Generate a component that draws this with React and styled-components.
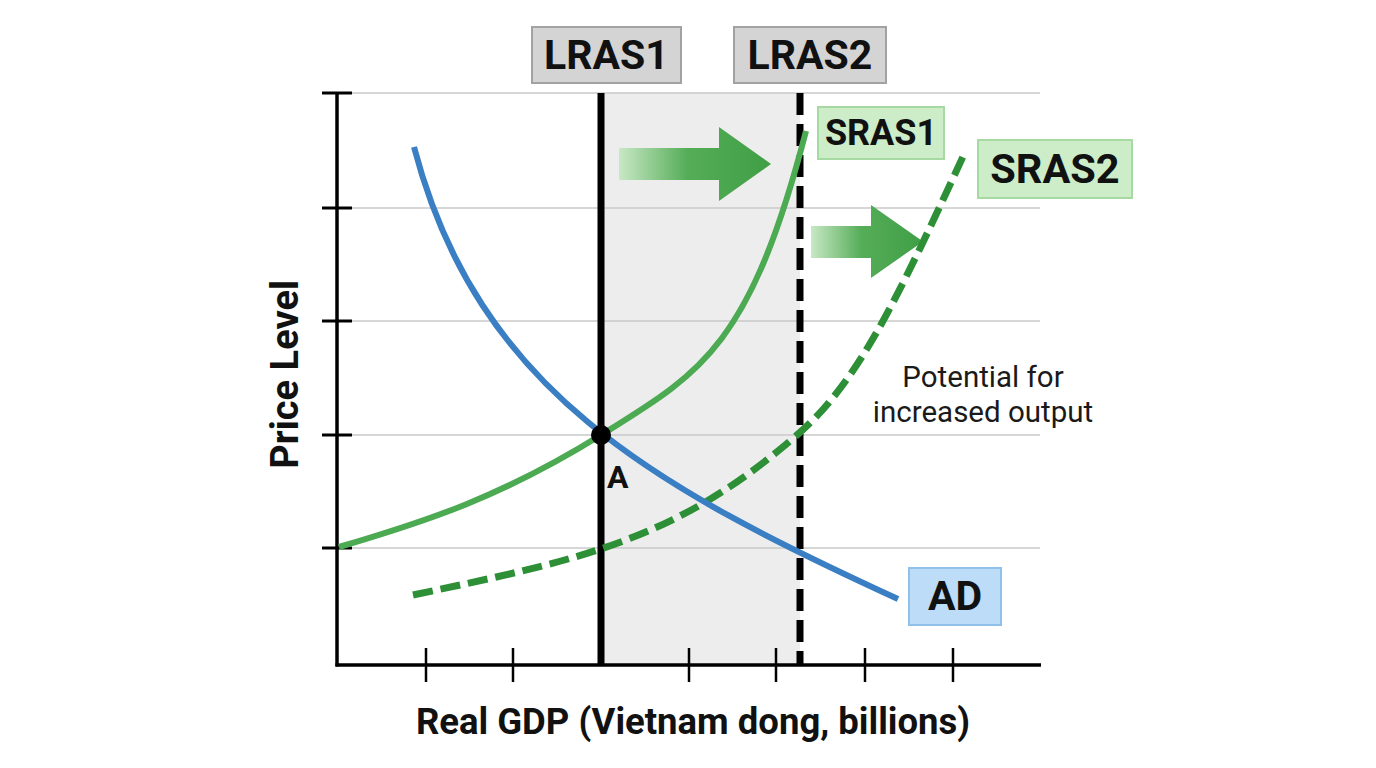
import React from "react";
import styled, { createGlobalStyle } from "styled-components";

const Global = createGlobalStyle`
  html, body { margin: 0; padding: 0; background: #ffffff; }
  body { font-family: Roboto, "Liberation Sans", Arial, sans-serif; color: #111111; }
`;

const PLOT_X = 310;
const PLOT_W = 850;
const PLOT_H = 695;

const Page = styled.div`
  width: 1376px;
  height: 768px;
  display: flex;
  flex-direction: column;
  background: #ffffff;
  overflow: hidden;
`;

const ChartRow = styled.div`
  display: flex;
  height: ${PLOT_H}px;
`;

const YAxisCell = styled.div`
  width: ${PLOT_X}px;
  flex: none;
  display: flex;
  justify-content: flex-end;
  align-items: center;
  box-sizing: border-box;
  padding-right: 6px;
  padding-top: 53px;
`;

const YTitle = styled.div`
  writing-mode: vertical-rl;
  transform: rotate(180deg);
  font-family: Roboto, "Liberation Sans", Arial, sans-serif;
  font-weight: 700;
  font-size: 38px;
  line-height: 1;
  white-space: nowrap;
`;

const Plot = styled.div`
  position: relative;
  width: ${PLOT_W}px;
  height: ${PLOT_H}px;
  flex: none;
`;

const ChartSvg = styled.svg`
  display: block;
  width: ${PLOT_W}px;
  height: ${PLOT_H}px;
  overflow: visible;
`;

const Tag = styled.div`
  position: absolute;
  left: ${(p) => p.$x - PLOT_X}px;
  top: ${(p) => p.$y}px;
  width: ${(p) => p.$w}px;
  height: ${(p) => p.$h}px;
  box-sizing: border-box;
  display: flex;
  align-items: center;
  justify-content: center;
  background: ${(p) => p.$bg};
  border: 2px solid ${(p) => p.$border};
  font-family: Roboto, "Liberation Sans", Arial, sans-serif;
  font-weight: 700;
  font-size: ${(p) => p.$size}px;
  line-height: 1;
  color: #111111;
`;

const PointLabel = styled.div`
  position: absolute;
  left: ${(p) => p.$x - PLOT_X}px;
  top: ${(p) => p.$y}px;
  font-family: Roboto, "Liberation Sans", Arial, sans-serif;
  font-weight: 700;
  font-size: 32px;
  line-height: 1;
  color: #111111;
`;

const Note = styled.div`
  position: absolute;
  left: ${853 - PLOT_X}px;
  top: 360px;
  width: 260px;
  text-align: center;
  font-family: Roboto, "Liberation Sans", Arial, sans-serif;
  font-weight: 400;
  font-size: 29.5px;
  line-height: 35px;
  color: #1a1a1a;
`;

const XAxisRow = styled.div`
  flex: 1;
  box-sizing: border-box;
  padding: 9px 0 0 10px;
  text-align: center;
`;

const XTitle = styled.div`
  font-family: Roboto, "Liberation Sans", Arial, sans-serif;
  font-weight: 700;
  font-size: 36.5px;
  line-height: 1;
  white-space: nowrap;
`;

const AD_PATH = "M414,147 C478,391 653,486.5 898,599";
const SRAS1_PATH = "M339,547 C426,521.5 501,497 601,435 C701,373 750,346.6 806,131";
const SRAS2_PATH = "M413,595 C584,559 677,539.4 797,435 C857,382.8 893.5,307.5 966,150";

const gridYs = [93, 208, 321, 435, 548];
const xTicks = [426, 513, 689, 776, 865, 953];

function arrow(x0, yTop, yBot, xHead, hTop, hBot, xTip) {
  const yMid = (hTop + hBot) / 2;
  return `${x0},${yTop} ${xHead},${yTop} ${xHead},${hTop} ${xTip},${yMid} ${xHead},${hBot} ${xHead},${yBot} ${x0},${yBot}`;
}

function Chart() {
  return (
    <ChartSvg viewBox={`${PLOT_X} 0 ${PLOT_W} ${PLOT_H}`} xmlns="http://www.w3.org/2000/svg">
      <defs>
        <linearGradient id="arrowGrad" x1="0" y1="0" x2="1" y2="0">
          <stop offset="0" stopColor="#c8e8c5" />
          <stop offset="0.45" stopColor="#55ad58" />
          <stop offset="1" stopColor="#3f9f45" />
        </linearGradient>
      </defs>

      <rect x="601" y="93" width="199" height="572" fill="#ededed" />

      {gridYs.map((y) => (
        <line key={y} x1="351" y1={y} x2="1040" y2={y} stroke="#c8c8c8" strokeWidth="1.5" />
      ))}

      <line x1="337" y1="92" x2="337" y2="666.5" stroke="#000" strokeWidth="3.5" />
      {gridYs.map((y) => (
        <line key={`t${y}`} x1="322" y1={y} x2="352" y2={y} stroke="#000" strokeWidth="3" />
      ))}
      <line x1="335.5" y1="665" x2="1041" y2="665" stroke="#000" strokeWidth="3.5" />
      {xTicks.map((x) => (
        <line key={`x${x}`} x1={x} y1="648" x2={x} y2="682" stroke="#000" strokeWidth="2.5" />
      ))}

      <line x1="601" y1="93" x2="601" y2="665" stroke="#000" strokeWidth="7" />
      <line x1="800" y1="93" x2="800" y2="665" stroke="#000" strokeWidth="7" strokeDasharray="22 9" />

      <polygon points={arrow(619, 148, 180, 719, 127, 201, 771)} fill="url(#arrowGrad)" />
      <polygon points={arrow(811, 226, 258, 871, 205, 278, 923)} fill="url(#arrowGrad)" />

      <path d={SRAS2_PATH} fill="none" stroke="#2e9036" strokeWidth="7" strokeDasharray="20 8" />
      <path d={SRAS1_PATH} fill="none" stroke="#4caa52" strokeWidth="6" />
      <path d={AD_PATH} fill="none" stroke="#3a7fc3" strokeWidth="6" />

      <circle cx="601" cy="435" r="10" fill="#000" />
    </ChartSvg>
  );
}

export default function App() {
  return (
    <>
      <Global />
      <Page>
        <ChartRow>
          <YAxisCell>
            <YTitle>Price Level</YTitle>
          </YAxisCell>
          <Plot>
            <Chart />
            <Tag $x={531} $y={26} $w={151} $h={58} $bg="#d4d4d4" $border="#a2a2a2" $size={41}>LRAS1</Tag>
            <Tag $x={733} $y={26} $w={154} $h={58} $bg="#d4d4d4" $border="#a2a2a2" $size={41}>LRAS2</Tag>
            <Tag $x={817} $y={106} $w={128} $h={54} $bg="#ccedc8" $border="#a6daa2" $size={36}>SRAS1</Tag>
            <Tag $x={977} $y={139} $w={156} $h={60} $bg="#ccedc8" $border="#a6daa2" $size={41.5}>SRAS2</Tag>
            <Tag $x={908} $y={567} $w={94} $h={59} $bg="#bcdcf7" $border="#8fc1ea" $size={41}>AD</Tag>
            <PointLabel $x={607} $y={461}>A</PointLabel>
            <Note>
              Potential for
              <br />
              increased output
            </Note>
          </Plot>
        </ChartRow>
        <XAxisRow>
          <XTitle>Real GDP (Vietnam dong, billions)</XTitle>
        </XAxisRow>
      </Page>
    </>
  );
}
